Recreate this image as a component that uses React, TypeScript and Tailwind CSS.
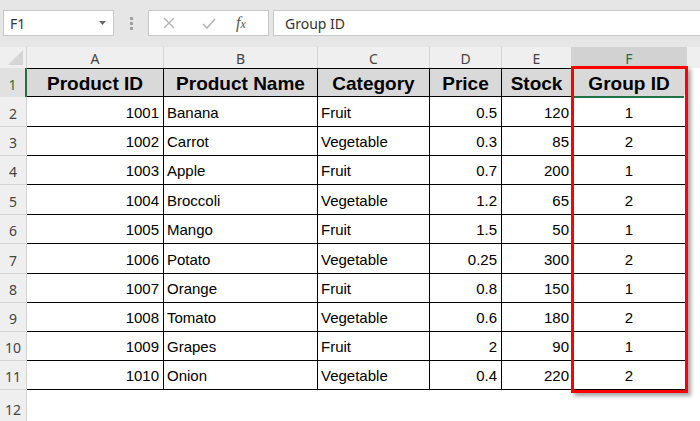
import React from "react";

const rows = [
  ["1001", "Banana", "Fruit", "0.5", "120", "1"],
  ["1002", "Carrot", "Vegetable", "0.3", "85", "2"],
  ["1003", "Apple", "Fruit", "0.7", "200", "1"],
  ["1004", "Broccoli", "Vegetable", "1.2", "65", "2"],
  ["1005", "Mango", "Fruit", "1.5", "50", "1"],
  ["1006", "Potato", "Vegetable", "0.25", "300", "2"],
  ["1007", "Orange", "Fruit", "0.8", "150", "1"],
  ["1008", "Tomato", "Vegetable", "0.6", "180", "2"],
  ["1009", "Grapes", "Fruit", "2", "90", "1"],
  ["1010", "Onion", "Vegetable", "0.4", "220", "2"],
];

const heights = ["h-[30px]", "h-[29px]", "h-[29px]", "h-[30px]", "h-[29px]", "h-[30px]", "h-[29px]", "h-[29px]", "h-[29px]", "h-[29px]"];
const widths = ["w-[137px]", "w-[154px]", "w-[112px]", "w-[72px]", "w-[70px]", "w-[115px]"];
const aligns = ["justify-end pr-[4px]", "justify-start pl-[3px]", "justify-start pl-[3px]", "justify-end pr-[4px]", "justify-end pr-[2px]", "justify-center"];
const letters = ["A", "B", "C", "D", "E", "F"];
const headers = ["Product ID", "Product Name", "Category", "Price", "Stock", "Group ID"];

export default function App() {
  return (
    <div className="relative w-[700px] h-[421px] overflow-hidden bg-[#e6e6e6] font-['Liberation_Sans',Arial,sans-serif]">
      {/* Formula bar */}
      <div className="flex h-[47px] pt-[10px] items-start">
        <div className="ml-[3px] w-[111px] h-[26px] bg-white border border-[#c8c8c8] flex items-center justify-between pl-[6px] pr-[7px]">
          <span className="text-[14px] text-[#333] font-['Noto_Sans',sans-serif]">F1</span>
          <svg width="7" height="4" viewBox="0 0 7 4"><path d="M0 0 L7 0 L3.5 4 Z" fill="#666" /></svg>
        </div>
        <div className="w-[34px] h-[26px] flex flex-col items-center justify-center gap-[2px]">
          <div className="w-[3px] h-[3px] bg-[#a0a0a0]" />
          <div className="w-[3px] h-[3px] bg-[#a0a0a0]" />
          <div className="w-[3px] h-[3px] bg-[#a0a0a0]" />
        </div>
        <div className="w-[121px] h-[26px] bg-white border border-[#c8c8c8] flex items-center">
          <svg className="ml-[14px]" width="12" height="12" viewBox="0 0 12 12"><path d="M1 1 L11 11 M11 1 L1 11" stroke="#b4b4b4" strokeWidth="1.4" /></svg>
          <svg className="ml-[27px]" width="14" height="11" viewBox="0 0 14 11"><path d="M1 6 L5 10 L13 1" stroke="#b4b4b4" strokeWidth="1.6" fill="none" /></svg>
          <span className="ml-[20px] text-[16px] italic text-[#555] font-['Liberation_Serif',serif] leading-none">f<span className="text-[12px]">x</span></span>
        </div>
        <div className="ml-[4px] flex-1 h-[26px] bg-white border-y border-l border-[#c8c8c8] flex items-center pl-[11px]">
          <span className="text-[14px] text-[#333] font-['Noto_Sans',sans-serif]">Group ID</span>
        </div>
      </div>

      {/* Column header row */}
      <div className="flex h-[21px] bg-[#efefef] font-['Noto_Sans',sans-serif] text-[14px] text-[#444]">
        <div className="w-[27px] h-full border-r border-[#d4d4d4] flex items-end justify-end pr-[3px] pb-[3px]">
          <svg width="15" height="15" viewBox="0 0 15 15"><path d="M15 0 L15 15 L0 15 Z" fill="#d5d5d5" /></svg>
        </div>
        {letters.map((l, i) => (
          <div
            key={l}
            className={`${widths[i]} h-full border-r border-[#d4d4d4] flex items-center justify-center pt-[2px] ${i === 5 ? "bg-[#d2d2d2] text-[#217346]" : ""}`}
          >
            {l}
          </div>
        ))}
        <div className="flex-1 h-full" />
      </div>

      {/* Row 1 header */}
      <div className="flex h-[29px] bg-white">
        <div className="w-[27px] h-full bg-[#e1e1e1] border-r-2 border-[#217346] flex items-end justify-center pb-[2px] font-['Noto_Sans',sans-serif] text-[14px] text-[#217346]">
          1
        </div>
        {headers.map((h, i) => (
          <div
            key={h}
            className={`${widths[i]} h-full bg-[#d9d9d9] border-t border-r border-b border-black flex items-center justify-center pt-[3px] text-[19px] font-bold text-black`}
          >
            {h}
          </div>
        ))}
        <div className="flex-1 h-full bg-white" />
      </div>

      {/* Data rows */}
      {rows.map((r, ri) => (
        <div key={ri} className={`flex ${heights[ri]} bg-white`}>
          <div className="w-[27px] h-full bg-[#efefef] border-r border-b border-[#d4d4d4] flex items-end justify-center pb-[2px] font-['Noto_Sans',sans-serif] text-[14px] text-[#444]">
            {ri + 2}
          </div>
          {r.map((c, ci) => (
            <div
              key={ci}
              className={`${widths[ci]} h-full border-r border-b border-black flex items-end pb-[6px] text-[15px] text-black leading-none ${aligns[ci]}`}
            >
              {c}
            </div>
          ))}
          <div className="flex-1 h-full" />
        </div>
      ))}

      {/* Row 12 */}
      <div className="flex h-[40px] bg-white">
        <div className="w-[27px] h-full bg-[#efefef] border-r border-[#d4d4d4] flex justify-center pt-[9px] font-['Noto_Sans',sans-serif] text-[14px] text-[#444]">
          12
        </div>
        <div className="flex-1 h-full" />
      </div>

      {/* Selection bottom line and fill handle */}
      <div className="absolute left-[573px] top-[96px] w-[112px] h-[2px] bg-[#217346]" />
      <div className="absolute left-[684px] top-[95px] w-[5px] h-[5px] bg-[#217346] border border-white" />

      {/* Red highlight rectangle */}
      <div className="absolute left-[571px] top-[66px] w-[117px] h-[327px] border-[3px] border-[#ff0000] shadow-[3px_3px_4px_rgba(0,0,0,0.35)]" />
    </div>
  );
}
